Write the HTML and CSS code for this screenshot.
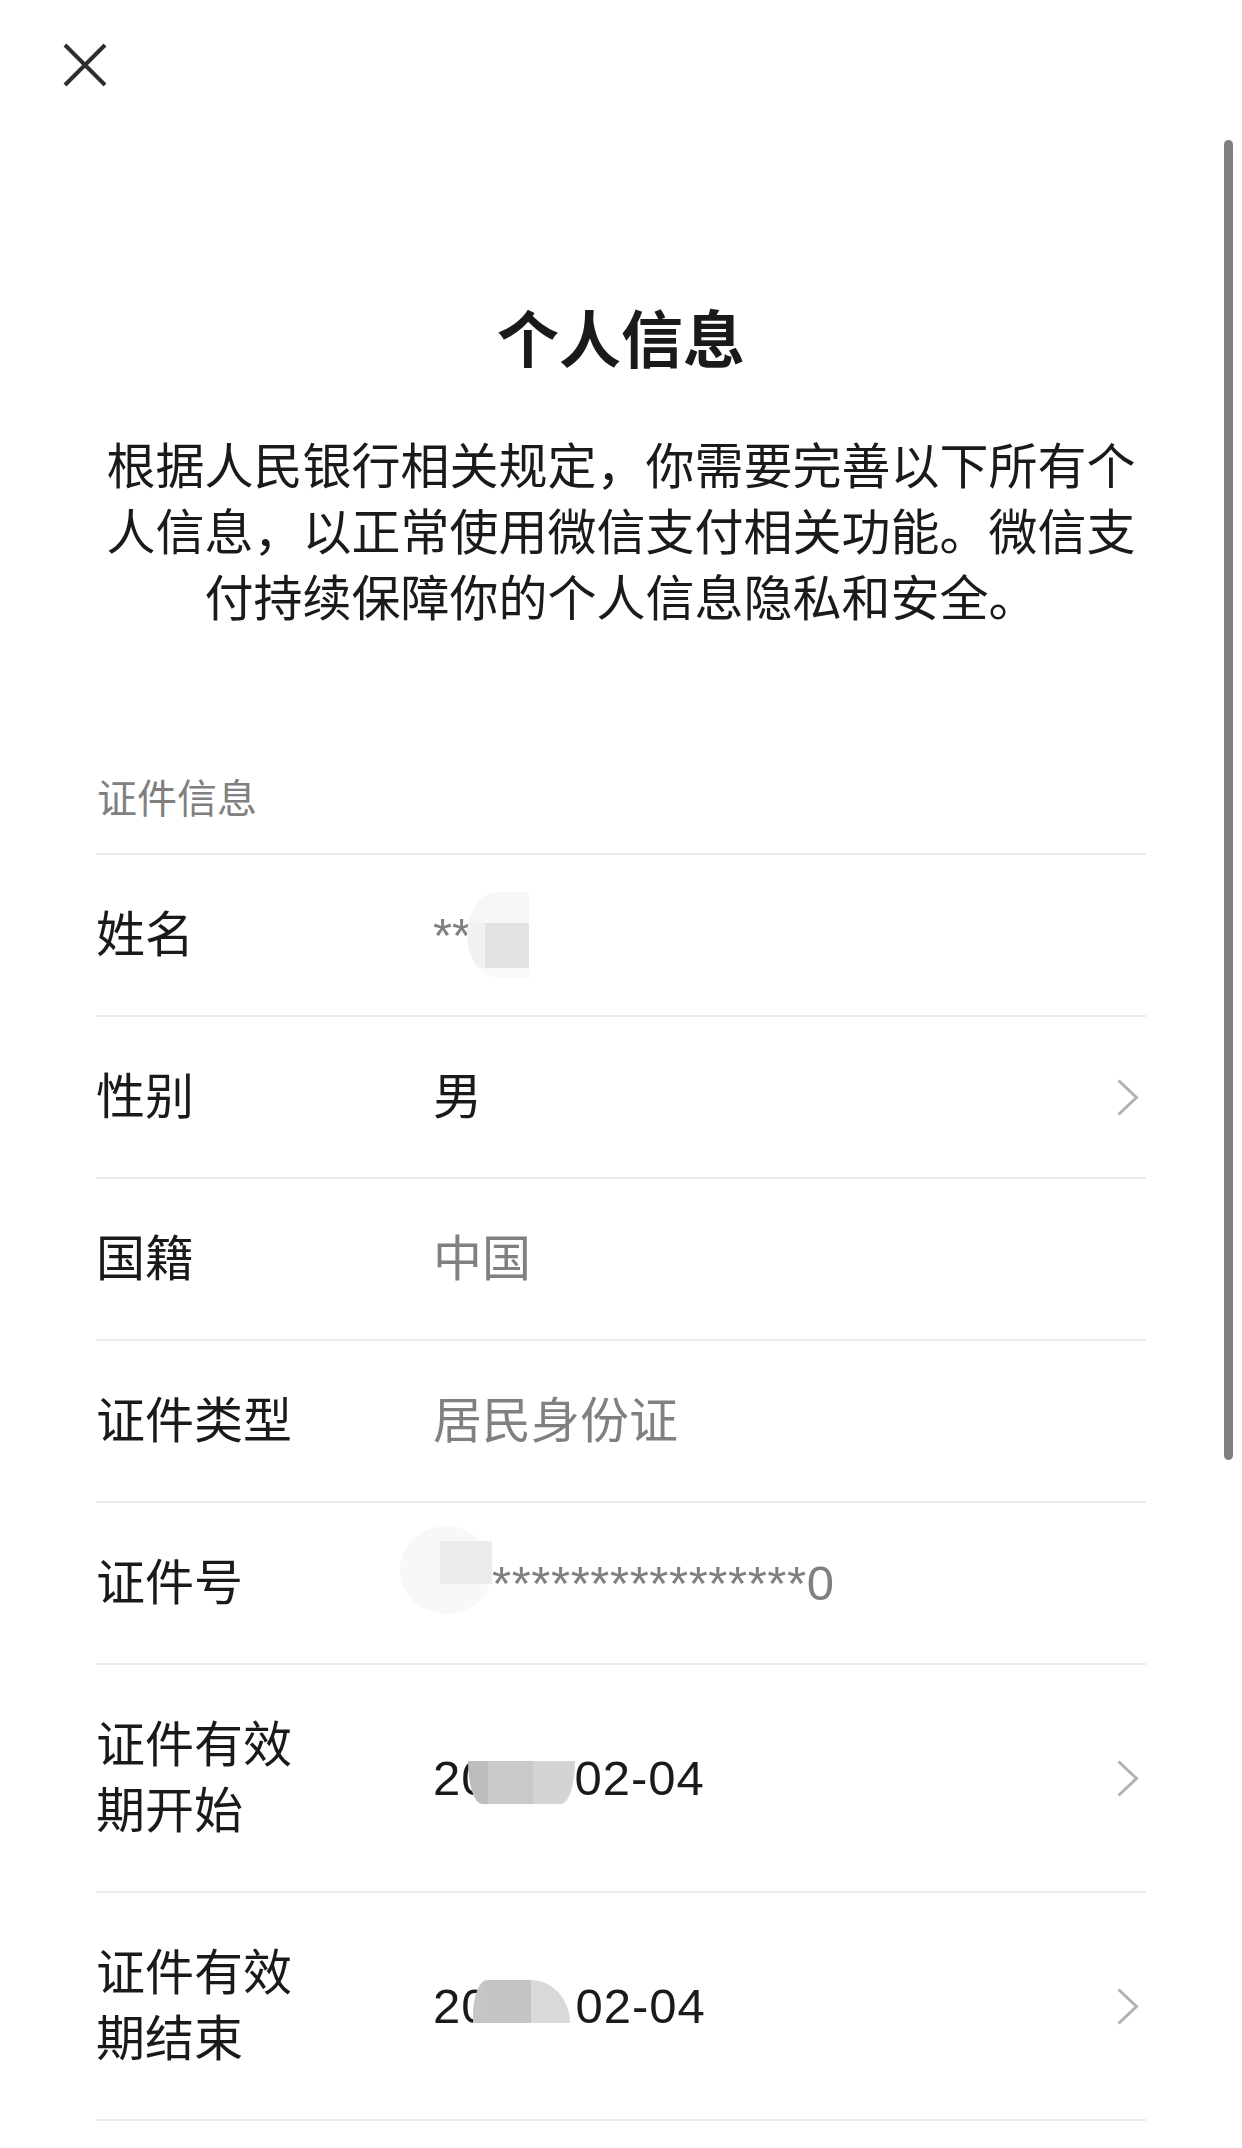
FILE: index.html
```html
<!DOCTYPE html>
<html lang="zh-CN">
<head>
<meta charset="utf-8">
<title>个人信息</title>
<link rel="stylesheet" href="styles.css">
</head>
<body>
<div class="page">
  <div class="scroll-indicator"></div>
  <header class="nav">
    <button class="close" aria-label="关闭">
      <svg width="44" height="44" viewBox="0 0 44 44"><path d="M2 2 L42 42 M42 2 L2 42" fill="none" stroke="#2e2e2e" stroke-width="4"/></svg>
    </button>
  </header>
  <main class="content">
    <h1 class="title">个人信息</h1>
    <p class="intro">根据人民银行相关规定，你需要完善以下所有个人信息，以正常使用微信支付相关功能。微信支付持续保障你的个人信息隐私和安全。</p>
    <section class="group">
      <div class="group-title">证件信息</div>
      <div class="list">
        <div class="row">
          <div class="label">姓名</div>
          <div class="value muted"><span>**</span><span class="blob-name"><i class="c-a"></i><i class="c-b"></i><i class="c-c"></i><i class="c-d"></i><i class="c-e"></i><i class="c-e"></i></span></div>
          <div class="arrow"></div>
        </div>
        <div class="row">
          <div class="label">性别</div>
          <div class="value">男</div>
          <div class="arrow"><svg width="24" height="37" viewBox="0 0 24 37"><path d="M2.5 1.5 L20.5 18.5 L2.5 35.5" fill="none" stroke="#b2b2b2" stroke-width="3"/></svg></div>
        </div>
        <div class="row">
          <div class="label">国籍</div>
          <div class="value muted">中国</div>
          <div class="arrow"></div>
        </div>
        <div class="row">
          <div class="label">证件类型</div>
          <div class="value muted">居民身份证</div>
          <div class="arrow"></div>
        </div>
        <div class="row">
          <div class="label">证件号</div>
          <div class="value muted"><span class="blob-id"><i></i><i></i><i></i><i class="sq"></i><i></i><i></i></span><span class="idnum">****************0</span></div>
          <div class="arrow"></div>
        </div>
        <div class="row">
          <div class="label">证件有效期开始</div>
          <div class="value date"><span>20</span><span class="blob-start"><i class="p1"></i><i class="p2"></i><i class="p3"></i></span><span>02-04</span></div>
          <div class="arrow"><svg width="24" height="37" viewBox="0 0 24 37"><path d="M2.5 1.5 L20.5 18.5 L2.5 35.5" fill="none" stroke="#b2b2b2" stroke-width="3"/></svg></div>
        </div>
        <div class="row">
          <div class="label">证件有效期结束</div>
          <div class="value date"><span>20</span><span class="blob-end"><i class="p1"></i><i class="p2"></i><i class="p3"></i></span><span>02-04</span></div>
          <div class="arrow"><svg width="24" height="37" viewBox="0 0 24 37"><path d="M2.5 1.5 L20.5 18.5 L2.5 35.5" fill="none" stroke="#b2b2b2" stroke-width="3"/></svg></div>
        </div>
      </div>
    </section>
  </main>
</div>
</body>
</html>
```

FILE: styles.css
```css
* { box-sizing: border-box; }
html, body { margin: 0; padding: 0; background: #ffffff; }
body {
  font-family: "Liberation Sans", "Noto Sans CJK SC", sans-serif;
  color: #1a1a1a;
}
.page { position: relative; width: 1242px; min-height: 2148px; overflow: hidden; }

.scroll-indicator {
  position: absolute;
  top: 140px;
  right: 9px;
  width: 9px;
  height: 1320px;
  border-radius: 5px;
  background: #808080;
}

.nav { height: 130px; display: flex; align-items: center; padding-left: 63px; }
.close { border: 0; background: none; padding: 0; margin: 0; width: 44px; height: 44px; display: block; }
.close svg { display: block; }

.content { padding: 0 96px; }

.title {
  margin: 168px 0 0;
  font-size: 62px;
  line-height: 88px;
  font-weight: 700;
  text-align: center;
  color: #1a1a1a;
}

.intro {
  margin: 48px 0 0;
  font-size: 49px;
  line-height: 66px;
  text-align: center;
  color: #1a1a1a;
}

.group-title {
  padding: 139px 0 26px 1px;
  font-size: 40px;
  line-height: 56px;
  color: #808080;
}

.list { border-bottom: 2px solid #ececec; }
.row {
  display: grid;
  grid-template-columns: 337px 1fr auto;
  align-items: center;
  min-height: 162px;
  border-top: 2px solid #ececec;
  font-size: 49px;
  line-height: 66px;
}
.label { max-width: 200px; padding: 47px 0; color: #1a1a1a; }
.value { display: flex; align-items: center; color: #1a1a1a; white-space: nowrap; }
.value.muted { color: #808080; }
.value.date { letter-spacing: 1px; }
.arrow { width: 24px; margin-right: 6px; display: flex; align-items: center; }
.arrow svg { display: block; }

.value i { display: block; }

.blob-name {
  display: inline-grid;
  grid-template-columns: 18px 44px;
  grid-template-rows: 31px 45px 10px;
  width: 62px;
  height: 86px;
  margin-left: -4px;
  border-radius: 31px 0 0 31px / 43px 0 0 43px;
  overflow: hidden;
}
.blob-name .c-a { background: #f6f6f6; }
.blob-name .c-b { background: #f7f7f7; }
.blob-name .c-c { background: #f1f1f1; }
.blob-name .c-d { background: #e3e3e3; }
.blob-name .c-e { background: #fafafa; }

.blob-id {
  display: inline-grid;
  grid-template-columns: 40px 52px;
  grid-template-rows: 15px 43px 30px;
  width: 92px;
  height: 88px;
  margin-left: -33px;
  margin-bottom: 26px;
  border-radius: 50%;
  background: #f8f8f8;
}
.blob-id .sq { background: #ececec; }
.idnum { letter-spacing: 0.6px; }

.blob-start {
  display: inline-flex;
  width: 107px;
  height: 43px;
  margin-left: -22px;
  margin-top: 8px;
  border-radius: 0 0 14px 14px / 0 0 43px 43px;
  overflow: hidden;
}
.blob-start .p1 { width: 20px; background: #bdbdbd; }
.blob-start .p2 { width: 45px; background: #c9c9c9; }
.blob-start .p3 { width: 42px; background: #d4d4d4; }

.blob-end {
  display: inline-flex;
  width: 97px;
  height: 43px;
  margin-left: -17px;
  margin-right: 6px;
  margin-bottom: 10px;
  border-radius: 14px 39px 0 0 / 36px 43px 0 0;
  overflow: hidden;
}
.blob-end .p1 { width: 14px; background: #c6c6c6; }
.blob-end .p2 { width: 44px; background: #c4c4c4; }
.blob-end .p3 { width: 39px; background: #d9d9d9; }
```
